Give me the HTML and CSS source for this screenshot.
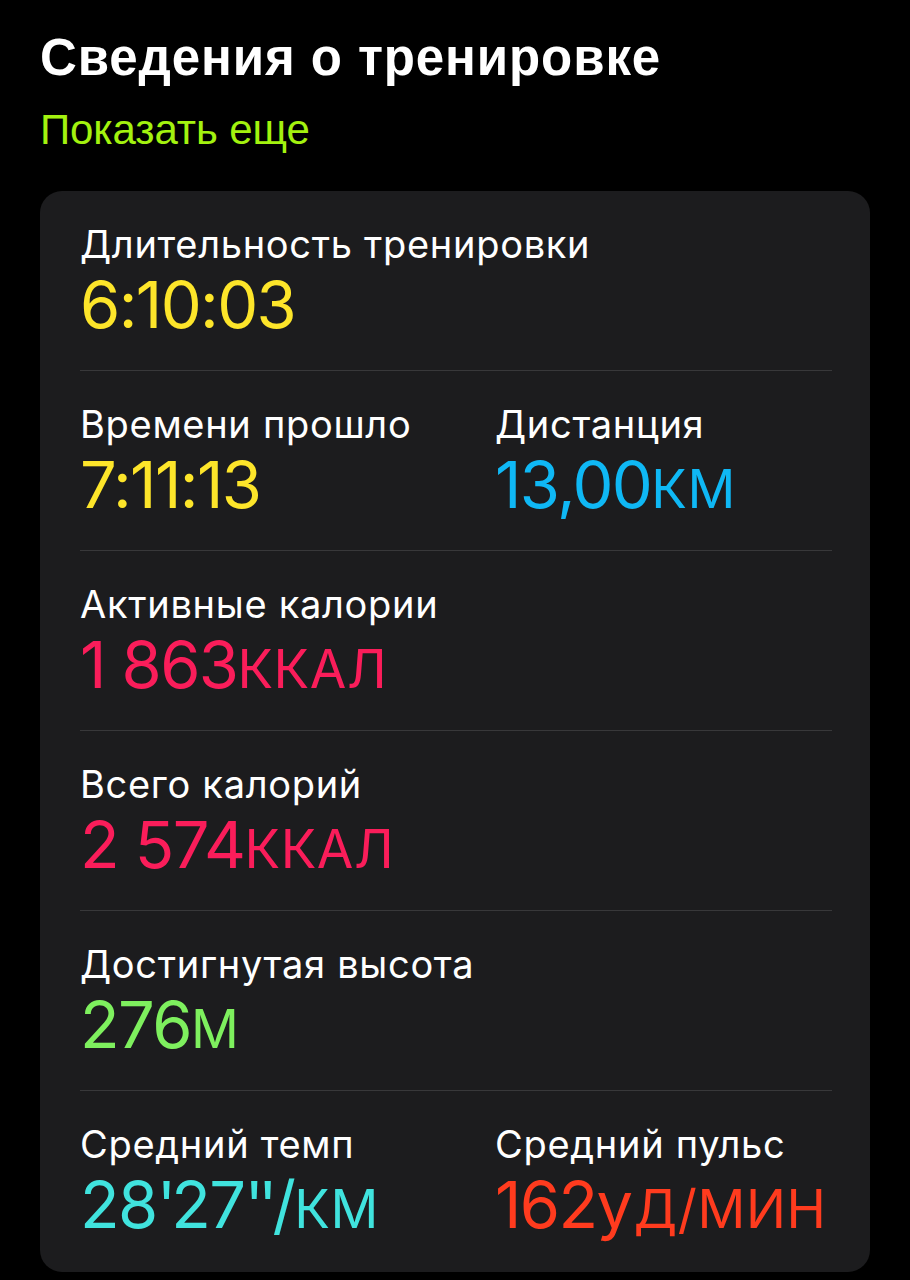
FILE: index.html
```html
<!DOCTYPE html>
<html lang="ru">
<head>
<meta charset="utf-8">
<link rel="stylesheet" href="styles.css">
</head>
<body>
<main class="page">
  <h1 class="title">Сведения о тренировке</h1>
  <a class="more">Показать еще</a>
  <section class="card">
    <div class="row">
      <div class="metric">
        <div class="label">Длительность тренировки</div>
        <div class="value c-yellow">6:10:03</div>
      </div>
    </div>
    <div class="row two">
      <div class="metric">
        <div class="label">Времени прошло</div>
        <div class="value c-yellow">7:11:13</div>
      </div>
      <div class="metric">
        <div class="label">Дистанция</div>
        <div class="value c-blue">13,00<span class="unit">км</span></div>
      </div>
    </div>
    <div class="row">
      <div class="metric">
        <div class="label">Активные калории</div>
        <div class="value c-pink">1 863<span class="unit">ккал</span></div>
      </div>
    </div>
    <div class="row">
      <div class="metric">
        <div class="label">Всего калорий</div>
        <div class="value c-pink">2 574<span class="unit">ккал</span></div>
      </div>
    </div>
    <div class="row">
      <div class="metric">
        <div class="label">Достигнутая высота</div>
        <div class="value c-green">276<span class="unit">м</span></div>
      </div>
    </div>
    <div class="row two">
      <div class="metric">
        <div class="label">Средний темп</div>
        <div class="value c-cyan">28<span class="mark">'</span>27<span class="mark">''</span>/<span class="unit">км</span></div>
      </div>
      <div class="metric">
        <div class="label">Средний пульс</div>
        <div class="value c-red">162<span class="unit-low">у</span><span class="unit">д/мин</span></div>
      </div>
    </div>
  </section>
</main>
</body>
</html>
```

FILE: styles.css
```css
html, body {
  margin: 0;
  padding: 0;
  background: #000;
}
.page {
  padding: 28px 40px 0 40px;
  display: flex;
  flex-direction: column;
  align-items: flex-start;
}
.title {
  margin: 0;
  font-family: "Liberation Sans", Arial, sans-serif;
  font-weight: 700;
  font-size: 51px;
  line-height: 60px;
  color: #fff;
  letter-spacing: 0.9px;
}
.more {
  margin-top: 17px;
  font-family: "Liberation Sans", Arial, sans-serif;
  font-size: 42px;
  line-height: 50px;
  color: #a3f20f;
  letter-spacing: -0.1px;
}
.card {
  align-self: stretch;
  margin-top: 36px;
  background: #1c1c1e;
  border-radius: 22px;
  padding: 0 38px 0 40px;
}
.row {
  display: flex;
  height: 180px;
  padding-top: 31px;
  box-sizing: border-box;
  border-bottom: 1px solid #38383a;
}
.row:last-child {
  border-bottom: none;
  height: 181px;
}
.row.two {
  display: grid;
  grid-template-columns: 337px 1fr;
  column-gap: 78px;
}
.label {
  font-family: Inter, "Noto Sans", sans-serif;
  font-size: 38px;
  line-height: 44px;
  color: #fff;
  letter-spacing: 0.7px;
  white-space: nowrap;
}
.value {
  margin-top: 3px;
  font-family: Inter, "Noto Sans", sans-serif;
  font-size: 65px;
  line-height: 72px;
  letter-spacing: -1.6px;
  white-space: nowrap;
}
.unit {
  font-size: 53px;
  text-transform: uppercase;
  letter-spacing: 0.6px;
}
.unit-low {
  letter-spacing: 0.6px;
}
.mark {
  letter-spacing: -6px;
  margin-right: 1px;
}
.c-yellow { color: #fde52a; }
.c-blue { color: #0fb8f5; }
.c-pink { color: #fa1d5a; }
.c-green { color: #7ef05e; }
.c-cyan { color: #40e3de; }
.c-red { color: #ff3b1e; }
```
